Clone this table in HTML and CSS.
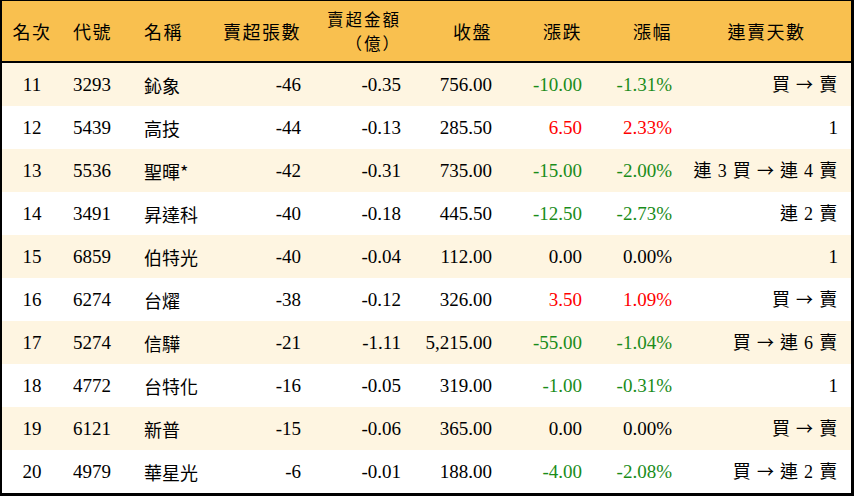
FILE: index.html
```html
<!DOCTYPE html>
<html lang="zh-Hant">
<head>
<meta charset="utf-8">
<title>賣超排行</title>
<link rel="stylesheet" href="styles.css">
</head>
<body>
<table class="rank">
  <colgroup>
    <col class="c-rank"><col class="c-code"><col class="c-name"><col class="c-qty"><col class="c-amt"><col class="c-close"><col class="c-chg"><col class="c-pct"><col class="c-days">
  </colgroup>
  <thead>
    <tr>
      <th class="ctr">名次</th>
      <th class="lft">代號</th>
      <th class="lft">名稱</th>
      <th>賣超張數</th>
      <th class="two"><span class="ln">賣超金額</span><span class="ln">（億）</span></th>
      <th>收盤</th>
      <th>漲跌</th>
      <th>漲幅</th>
      <th class="ctr">連賣天數</th>
    </tr>
  </thead>
  <tbody>
    <tr><td class="ctr">11</td><td class="lft">3293</td><td class="lft cjk">鈊象</td><td>-46</td><td>-0.35</td><td>756.00</td><td class="down">-10.00</td><td class="down">-1.31%</td><td class="days">買 <span class="arr">→</span> 賣</td></tr>
    <tr><td class="ctr">12</td><td class="lft">5439</td><td class="lft cjk">高技</td><td>-44</td><td>-0.13</td><td>285.50</td><td class="up">6.50</td><td class="up">2.33%</td><td>1</td></tr>
    <tr><td class="ctr">13</td><td class="lft">5536</td><td class="lft cjk">聖暉*</td><td>-42</td><td>-0.31</td><td>735.00</td><td class="down">-15.00</td><td class="down">-2.00%</td><td class="days">連 3 買 <span class="arr">→</span> 連 4 賣</td></tr>
    <tr><td class="ctr">14</td><td class="lft">3491</td><td class="lft cjk">昇達科</td><td>-40</td><td>-0.18</td><td>445.50</td><td class="down">-12.50</td><td class="down">-2.73%</td><td class="days">連 2 賣</td></tr>
    <tr><td class="ctr">15</td><td class="lft">6859</td><td class="lft cjk">伯特光</td><td>-40</td><td>-0.04</td><td>112.00</td><td>0.00</td><td>0.00%</td><td>1</td></tr>
    <tr><td class="ctr">16</td><td class="lft">6274</td><td class="lft cjk">台燿</td><td>-38</td><td>-0.12</td><td>326.00</td><td class="up">3.50</td><td class="up">1.09%</td><td class="days">買 <span class="arr">→</span> 賣</td></tr>
    <tr><td class="ctr">17</td><td class="lft">5274</td><td class="lft cjk">信驊</td><td>-21</td><td>-1.11</td><td>5,215.00</td><td class="down">-55.00</td><td class="down">-1.04%</td><td class="days">買 <span class="arr">→</span> 連 6 賣</td></tr>
    <tr><td class="ctr">18</td><td class="lft">4772</td><td class="lft cjk">台特化</td><td>-16</td><td>-0.05</td><td>319.00</td><td class="down">-1.00</td><td class="down">-0.31%</td><td>1</td></tr>
    <tr><td class="ctr">19</td><td class="lft">6121</td><td class="lft cjk">新普</td><td>-15</td><td>-0.06</td><td>365.00</td><td>0.00</td><td>0.00%</td><td class="days">買 <span class="arr">→</span> 賣</td></tr>
    <tr><td class="ctr">20</td><td class="lft">4979</td><td class="lft cjk">華星光</td><td>-6</td><td>-0.01</td><td>188.00</td><td class="down">-4.00</td><td class="down">-2.08%</td><td class="days">買 <span class="arr">→</span> 連 2 賣</td></tr>
  </tbody>
</table>
</body>
</html>
```

FILE: styles.css
```css
html, body {
  margin: 0;
  padding: 0;
  background: #ffffff;
}

.rank {
  width: 854px;
  table-layout: fixed;
  border-collapse: separate;
  border-spacing: 0;
  border-style: solid;
  border-color: #000;
  border-width: 1px 3px 3px 2px;
  font-family: "Liberation Serif", "Noto Sans CJK TC", serif;
  font-size: 19px;
  color: #000;
}

.c-rank { width: 60px; }
.c-code { width: 71px; }
.c-name { width: 72px; }
.c-qty { width: 106px; }
.c-amt { width: 100px; }
.c-close { width: 91px; }
.c-chg { width: 90px; }
.c-pct { width: 90px; }
.c-days { width: 169px; }

.rank th {
  background: #f9c04f;
  height: 60px;
  padding: 0 10px 0 0;
  font-family: "Noto Sans CJK TC", serif;
  font-weight: 400;
  font-size: 18px;
  letter-spacing: 1.5px;
  text-align: right;
  border-bottom: 2px solid #000;
  line-height: 22px;
  white-space: nowrap;
}

.rank th.two {
  font-size: 16.5px;
  letter-spacing: 2px;
  line-height: 24px;
}

.rank th.two .ln {
  display: block;
}

.rank td {
  height: 43px;
  padding: 0 10px 0 0;
  text-align: right;
  white-space: nowrap;
  line-height: 22px;
}

.rank tbody tr:nth-child(odd) td {
  background: #fef5e1;
}

.rank td.days {
  font-family: "Liberation Serif", "Noto Sans CJK TC", serif;
  font-size: 18px;
  letter-spacing: 0.8px;
}

.rank td.days .arr {
  font-family: "Noto Sans CJK TC", serif;
  font-size: 17px;
}

.rank td.lft.cjk {
  font-family: "Noto Sans CJK TC", serif;
  font-size: 18px;
}

.rank .ctr {
  text-align: center;
  padding: 0;
}

.rank .lft {
  text-align: left;
  padding: 0 0 0 11px;
}

.rank td:last-child {
  padding-right: 13px;
}

.rank th:last-child {
  padding-right: 0;
}

.up { color: #ff0000; }
.down { color: #1a8c1a; }
```
